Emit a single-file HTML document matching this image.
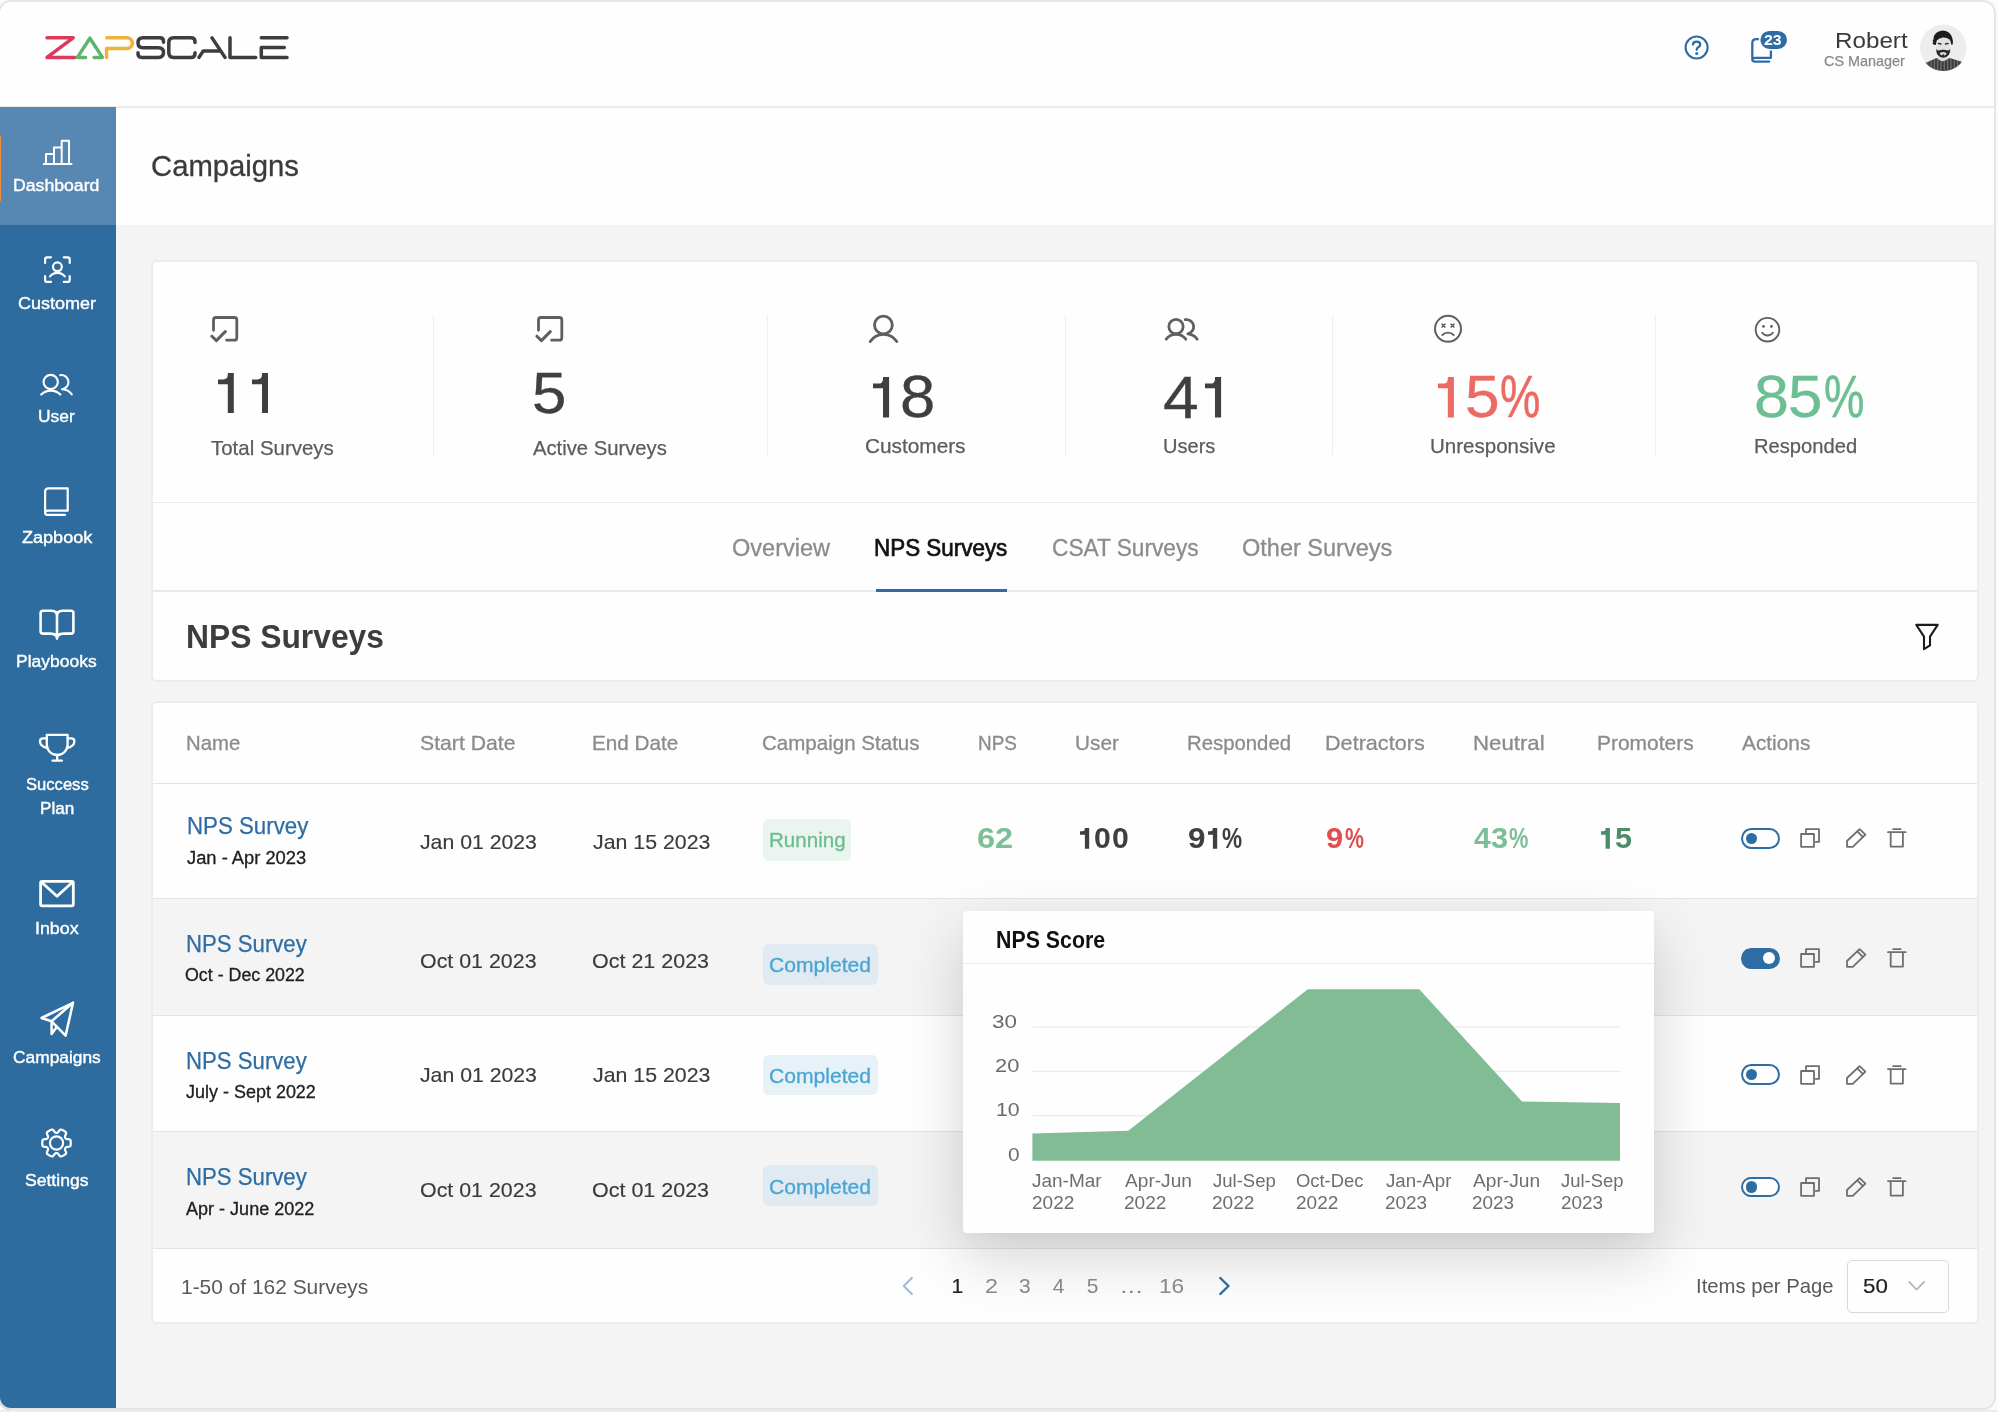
<!DOCTYPE html>
<html><head><meta charset="utf-8"><title>Campaigns</title>
<style>
html,body{margin:0;padding:0;}
body{width:1998px;height:1412px;overflow:hidden;background:#f6f6f6;font-family:"Liberation Sans",sans-serif;position:relative;}
.t{position:absolute;white-space:nowrap;line-height:1;margin:0;padding:0;transform-origin:0 0;}
.b{position:absolute;box-sizing:border-box;display:block;}
</style></head><body><div id="wrap" style="position:absolute;left:0;top:0;width:1998px;height:1412px;will-change:transform">
<div class="b" style="left:0px;top:0px;width:1996px;height:1410px;background:#f4f4f5;"></div>
<div class="b" style="left:0px;top:0px;width:1996px;height:108px;background:#fefefe;border-bottom:2px solid #ebebeb;"></div>
<div class="b" style="left:116px;top:108px;width:1880px;height:117px;background:#fefefe;"></div>
<div class="b" style="left:0px;top:107px;width:116px;height:1303px;background:#2e6c9f;"></div>
<div class="b" style="left:0px;top:107px;width:116px;height:118px;background:#5788b3;"></div>
<div class="b" style="left:0px;top:136px;width:1.2px;height:65px;background:#ee8f3c;"></div>
<svg class="b" style="left:40px;top:28px;" width="260" height="40" viewBox="40 28 260 40" fill="none">
<g stroke-width="3.5" stroke-linecap="round" stroke-linejoin="round" fill="none">
<path d="M47 37.8H73.2L47 57.4H75" stroke="#dc3a5d"/>
<path d="M89.9 38.2L77.4 57.4H85.6M89.9 38.2L102.4 57.4H94.1" stroke="#5fb56b"/>
<path d="M106.8 37.8H127A5.35 5.35 0 0 1 127 48.5H106.6V57.4" stroke="#efb23b"/>
<path d="M163.5 42.3V41.5Q163.5 37.8 159.8 37.8H143Q138 37.8 138 42.7Q138 47.7 143 47.7H158.5Q163.5 47.7 163.5 52.5Q163.5 57.4 158.5 57.4H141.7Q138 57.4 138 53.7V52.8" stroke="#3d3d41"/>
<path d="M195 42.5V41.8Q195 37.8 191 37.8H173.8Q168.8 37.8 168.8 42.8V52.4Q168.8 57.4 173.8 57.4H191Q195 57.4 195 53.4V52.8" stroke="#3d3d41"/>
<path d="M212 37.9L225 57.4M220.5 51H203.2L199 57.4" stroke="#3d3d41"/>
<path d="M230 37.8V57.4H255.7" stroke="#3d3d41"/>
<path d="M261.3 37.8H287M284.3 47.4H261.3V57.4H287" stroke="#3d3d41"/>
</g></svg>
<svg class="b" style="left:1682px;top:33px;" width="30" height="30" viewBox="1682 33 30 30" fill="none"><circle cx="1696.6" cy="47.5" r="11" stroke="#2e6da4" stroke-width="2.1"/><path d="M1693 44.6Q1693 41.6 1696.6 41.6Q1700.2 41.6 1700.2 44.4Q1700.2 46.2 1698.2 47.2Q1696.7 48 1696.7 49.8" stroke="#2e6da4" stroke-width="2.3" stroke-linecap="round" fill="none"/><circle cx="1696.7" cy="53.6" r="1.5" fill="#2e6da4"/></svg>
<svg class="b" style="left:1745px;top:25px;" width="50" height="45" viewBox="1745 25 50 45" fill="none"><path d="M1752.3 57.8V43.2Q1752.3 39.2 1756.3 39.2H1767Q1770.9 39.2 1770.9 43.2V57.8H1755.2Q1752.3 57.8 1752.3 59.7Q1752.3 61.6 1755.2 61.6H1769.2" stroke="#2e6da4" stroke-width="2.3" stroke-linecap="round" stroke-linejoin="round" fill="none"/><rect x="1759.6" y="30.1" width="28.2" height="19.6" rx="9.8" fill="#2e6da4" stroke="#fdfdfd" stroke-width="1.6"/></svg>
<div class="t" style="left:1764.44px;top:33.00px;font-size:14.2px;color:#ffffff;transform:scaleX(1.1216);font-weight:700;">23</div>
<div class="t" style="left:1834.79px;top:29.00px;font-size:22.9px;color:#3a3a3a;transform:scaleX(1.0570);">Robert</div>
<div class="t" style="left:1824.09px;top:54.00px;font-size:14.2px;color:#8a8a8a;transform:scaleX(1.0140);-webkit-text-stroke:0.25px #8a8a8a;">CS Manager</div>
<svg class="b" style="left:1915px;top:20px;" width="58" height="56" viewBox="1915 20 58 56" fill="none">
<defs><clipPath id="avc"><circle cx="1943.3" cy="47.7" r="23.3"/></clipPath>
<clipPath id="shirt"><path d="M1918 70L1925.5 63L1936 58.3Q1937.5 58 1938.2 59.2Q1943 63.2 1948 59Q1948.8 58 1950.2 58.2L1961.5 61.8L1969 68V76H1918Z"/></clipPath></defs>
<g clip-path="url(#avc)">
<rect x="1915" y="20" width="58" height="56" fill="#ededee"/>
<path d="M1938.3 55H1948V60Q1943 63.4 1938.3 60Z" fill="#dcdcdc"/>
<g clip-path="url(#shirt)"><rect x="1915" y="55" width="58" height="22" fill="#3b3b3b"/><path d="M1924.5 56V74M1927.8 56V74M1931.1 56V74M1934.4 56V74M1937.7 56V74M1941.0 56V74M1944.3 56V74M1947.6 56V74M1950.9 56V74M1954.2 56V74M1957.5 56V74M1960.8 56V74M1964.1 56V74" stroke="#707070" stroke-width="1.3"/></g>
<path d="M1936 42Q1936 36.5 1943.2 36.5Q1950.4 36.5 1950.4 42V50Q1950.4 57.6 1943.2 57.6Q1936 57.6 1936 50Z" fill="#e2e2e2"/>
<path d="M1936.1 49Q1936.4 57.6 1943.2 57.7Q1950 57.6 1950.3 49Q1949 50.5 1947.6 50.6Q1945.5 49.6 1943.2 49.7Q1940.9 49.6 1938.8 50.6Q1937.4 50.5 1936.1 49Z" fill="#262626"/>
<path d="M1939.6 53.2Q1943.2 50.8 1946.8 53.2Q1946 55.4 1944.2 55.6L1943.2 53.8L1942.2 55.6Q1940.4 55.4 1939.6 53.2Z" fill="#d6d6d6"/>
<path d="M1932.4 43.5L1933.3 41.8L1932.6 40.4L1933.8 38.8L1933.5 37.2Q1935.5 31.4 1942.6 30.6Q1949.5 31 1952 37Q1953.3 40.5 1952.8 44.4L1951 44.6Q1951 41.5 1949.6 39.6Q1946.5 37.4 1943 37.6Q1938.8 38 1936.8 40.6Q1936.2 42.5 1936 44.8L1934.4 45Z" fill="#1e1e1e"/>
<path d="M1937.8 43.6Q1939.6 43 1941.4 44.3M1945 44.3Q1946.8 43 1948.6 43.6" stroke="#2c2c2c" stroke-width="1.5" fill="none"/>
</g></svg>
<div class="t" style="left:151.01px;top:151.00px;font-size:29.5px;color:#3b3b3b;transform:scaleX(0.9918);-webkit-text-stroke:0.3px #3b3b3b;">Campaigns</div>
<svg class="b" style="left:30px;top:132px;" width="56" height="40" viewBox="30 132 56 40" fill="none"><g stroke="#ffffff" stroke-width="2" stroke-linecap="round" stroke-linejoin="round" fill="none"><path d="M44 164H71.3M46 164V154H54M54 164V147.4H61.7M61.7 164V140.7H69V164" stroke-linecap="square"/></g></svg>
<div class="t" style="left:12.74px;top:178.00px;font-size:16.9px;color:#ffffff;transform:scaleX(1.0449);-webkit-text-stroke:0.4px #ffffff;">Dashboard</div>
<svg class="b" style="left:30px;top:250px;" width="56" height="40" viewBox="30 250 56 40" fill="none"><g stroke="#ffffff" stroke-width="2.2" stroke-linecap="round" stroke-linejoin="round" fill="none"><path d="M45.1 263V259.3Q45.1 257.3 47.1 257.3H51M63.8 257.3H67.7Q69.7 257.3 69.7 259.3V263M45.1 276.2V279.9Q45.1 281.9 47.1 281.9H51M63.8 281.9H67.7Q69.7 281.9 69.7 279.9V276.2"/><circle cx="57.4" cy="266.8" r="4.4"/><path d="M50 276.4A9.6 9.6 0 0 1 64.8 276.4"/></g></svg>
<div class="t" style="left:17.75px;top:296.00px;font-size:16.9px;color:#ffffff;transform:scaleX(1.0665);-webkit-text-stroke:0.4px #ffffff;">Customer</div>
<svg class="b" style="left:30px;top:368px;" width="56" height="34" viewBox="30 368 56 34" fill="none"><g stroke="#ffffff" stroke-width="2.1" stroke-linecap="round" stroke-linejoin="round" fill="none"><circle cx="50.7" cy="382" r="7.15"/><path d="M41.2 394.6A13.5 13.5 0 0 1 60.4 394.6"/><path d="M60.2 375.1A7.15 7.15 0 1 1 62.3 389.3"/><path d="M62.3 389.3Q68.4 389.6 71.8 394.3"/></g></svg>
<div class="t" style="left:38.46px;top:409.00px;font-size:16.9px;color:#ffffff;transform:scaleX(1.0292);-webkit-text-stroke:0.4px #ffffff;">User</div>
<svg class="b" style="left:30px;top:482px;" width="56" height="40" viewBox="30 482 56 40" fill="none"><g stroke="#ffffff" stroke-width="2.2" stroke-linecap="round" stroke-linejoin="round" fill="none"><path d="M67.7 510.7V488.3H48.6Q45.1 488.3 45.1 491.8V512.5Q45.1 514.9 47.5 514.9H65M67.7 510.7H48Q45.1 510.7 45.1 513"/></g></svg>
<div class="t" style="left:21.67px;top:530.00px;font-size:16.9px;color:#ffffff;transform:scaleX(1.0689);-webkit-text-stroke:0.4px #ffffff;">Zapbook</div>
<svg class="b" style="left:30px;top:604px;" width="56" height="42" viewBox="30 604 56 42" fill="none"><g stroke="#ffffff" stroke-width="2.6" stroke-linecap="round" stroke-linejoin="round" fill="none"><path d="M57 615.8V638.6M57 615.8Q57 610.7 51.5 610.7H43Q40.6 610.7 40.6 613.1V631.2Q40.6 633.6 43 633.6H50.5Q57 633.6 57 638.6M57 615.8Q57 610.7 62.5 610.7H71Q73.4 610.7 73.4 613.1V631.2Q73.4 633.6 71 633.6H63.5Q57 633.6 57 638.6"/></g></svg>
<div class="t" style="left:16.45px;top:654.00px;font-size:16.9px;color:#ffffff;transform:scaleX(1.0355);-webkit-text-stroke:0.4px #ffffff;">Playbooks</div>
<svg class="b" style="left:30px;top:728px;" width="56" height="40" viewBox="30 728 56 40" fill="none"><g stroke="#ffffff" stroke-width="2.3" stroke-linecap="round" stroke-linejoin="round" fill="none"><path d="M46.8 734.8H67.6V744.6A10.4 10.4 0 0 1 46.8 744.6Z"/><path d="M46.8 738.3H43Q40 738.3 40 741.3Q40 746.5 47.4 748.2M67.6 738.3H71.4Q74.4 738.3 74.4 741.3Q74.4 746.5 67 748.2"/><path d="M57.2 755V760.7M52.5 760.7H61.9"/></g></svg>
<div class="t" style="left:25.51px;top:777.00px;font-size:16.9px;color:#ffffff;transform:scaleX(0.9824);-webkit-text-stroke:0.4px #ffffff;">Success</div>
<div class="t" style="left:39.98px;top:801.00px;font-size:16.9px;color:#ffffff;transform:scaleX(1.0160);-webkit-text-stroke:0.4px #ffffff;">Plan</div>
<svg class="b" style="left:30px;top:874px;" width="56" height="40" viewBox="30 874 56 40" fill="none"><g stroke="#ffffff" stroke-width="2.8" stroke-linecap="round" stroke-linejoin="round" fill="none"><rect x="40.6" y="881.3" width="32.7" height="24.5" rx="1.5"/><path d="M41.6 882.3L57 896.3L72.4 882.3"/></g></svg>
<div class="t" style="left:35.22px;top:921.00px;font-size:16.9px;color:#ffffff;transform:scaleX(1.0554);-webkit-text-stroke:0.4px #ffffff;">Inbox</div>
<svg class="b" style="left:30px;top:996px;" width="56" height="46" viewBox="30 996 56 46" fill="none"><g stroke="#ffffff" stroke-width="2.5" stroke-linecap="round" stroke-linejoin="round" fill="none"><path d="M73 1002.8L41.5 1018L51.6 1021.3Z"/><path d="M51.6 1021.3L65.6 1035.6L73 1002.8"/><path d="M51.6 1021.3V1034L56 1028"/></g></svg>
<div class="t" style="left:13.28px;top:1050.00px;font-size:16.9px;color:#ffffff;transform:scaleX(1.0273);-webkit-text-stroke:0.4px #ffffff;">Campaigns</div>
<svg class="b" style="left:30px;top:1122px;" width="56" height="42" viewBox="30 1122 56 42" fill="none"><g stroke="#ffffff" stroke-width="2.2" stroke-linecap="round" stroke-linejoin="round" fill="none"><path d="M70.75 1143.00L70.73 1143.75L70.67 1144.49L70.57 1145.23L70.44 1145.96L69.70 1146.54L68.20 1146.80L66.79 1146.95L65.95 1147.21L65.59 1147.63L65.33 1148.10L65.05 1148.56L64.87 1149.08L65.07 1149.94L65.64 1151.23L66.16 1152.66L66.04 1153.59L65.47 1154.07L64.88 1154.53L64.26 1154.95L63.62 1155.34L62.97 1155.70L62.30 1156.02L61.61 1156.30L60.90 1156.55L60.04 1156.20L59.06 1155.03L58.22 1153.89L57.58 1153.29L57.03 1153.19L56.50 1153.20L55.97 1153.19L55.42 1153.29L54.78 1153.89L53.94 1155.03L52.96 1156.20L52.10 1156.55L51.39 1156.30L50.70 1156.02L50.03 1155.70L49.38 1155.34L48.74 1154.95L48.12 1154.53L47.53 1154.07L46.96 1153.59L46.84 1152.66L47.36 1151.23L47.93 1149.94L48.13 1149.08L47.95 1148.56L47.67 1148.10L47.41 1147.63L47.05 1147.21L46.21 1146.95L44.80 1146.80L43.30 1146.54L42.56 1145.96L42.43 1145.23L42.33 1144.49L42.27 1143.75L42.25 1143.00L42.27 1142.25L42.33 1141.51L42.43 1140.77L42.56 1140.04L43.30 1139.46L44.80 1139.20L46.21 1139.05L47.05 1138.79L47.41 1138.37L47.67 1137.90L47.95 1137.44L48.13 1136.92L47.93 1136.06L47.36 1134.77L46.84 1133.34L46.96 1132.41L47.53 1131.93L48.12 1131.47L48.74 1131.05L49.37 1130.66L50.03 1130.30L50.70 1129.98L51.39 1129.70L52.10 1129.45L52.96 1129.80L53.94 1130.97L54.78 1132.11L55.42 1132.71L55.97 1132.81L56.50 1132.80L57.03 1132.81L57.58 1132.71L58.22 1132.11L59.06 1130.97L60.04 1129.80L60.90 1129.45L61.61 1129.70L62.30 1129.98L62.97 1130.30L63.62 1130.66L64.26 1131.05L64.88 1131.47L65.47 1131.93L66.04 1132.41L66.16 1133.34L65.64 1134.77L65.07 1136.06L64.87 1136.92L65.05 1137.44L65.33 1137.90L65.59 1138.37L65.95 1138.79L66.79 1139.05L68.20 1139.20L69.70 1139.46L70.44 1140.04L70.57 1140.77L70.67 1141.51L70.73 1142.25Z"/><circle cx="56.5" cy="1143" r="6.6"/></g></svg>
<div class="t" style="left:25.17px;top:1173.00px;font-size:16.9px;color:#ffffff;transform:scaleX(1.0402);-webkit-text-stroke:0.4px #ffffff;">Settings</div>
<div class="b" style="left:151px;top:260px;width:1828px;height:422px;background:#fefefe;border:2px solid #ececec;border-radius:6px;"></div>
<div class="b" style="left:153px;top:501.8px;width:1824px;height:1.2px;background:#e9e9e9;"></div>
<div class="b" style="left:153px;top:590.4px;width:1824px;height:1.2px;background:#e9e9e9;"></div>
<div class="b" style="left:433.0px;top:315px;width:1px;height:140px;background:#eeeeee;"></div>
<div class="b" style="left:767.0px;top:315px;width:1px;height:140px;background:#eeeeee;"></div>
<div class="b" style="left:1065.1px;top:315px;width:1px;height:140px;background:#eeeeee;"></div>
<div class="b" style="left:1331.9px;top:315px;width:1px;height:140px;background:#eeeeee;"></div>
<div class="b" style="left:1654.7px;top:315px;width:1px;height:140px;background:#eeeeee;"></div>
<svg class="b" style="left:205px;top:310px;" width="40" height="38" viewBox="205 310 40 38" fill="none"><g stroke="#5f5f5f" stroke-width="2.8" stroke-linecap="round" stroke-linejoin="round" fill="none"><path d="M213.5 330.3V320Q213.5 317.5 216 317.5H234.3Q236.8 317.5 236.8 320V337.7Q236.8 340.2 234.3 340.2H226.6"/><path d="M211.9 336.2L216.4 340.6L225.3 331.6" stroke-width="3"/></g></svg>
<svg class="b" style="left:529.8px;top:310px;" width="40" height="38" viewBox="529.8 310 40 38" fill="none"><g stroke="#5f5f5f" stroke-width="2.8" stroke-linecap="round" stroke-linejoin="round" fill="none"><path d="M538.3 330.3V320Q538.3 317.5 540.8 317.5H559.1Q561.6 317.5 561.6 320V337.7Q561.6 340.2 559.1 340.2H551.4"/><path d="M536.7 336.2L541.2 340.6L550.1 331.6" stroke-width="3"/></g></svg>
<svg class="b" style="left:862px;top:310px;" width="44" height="38" viewBox="862 310 44 38" fill="none"><g stroke="#5f5f5f" stroke-width="2.8" stroke-linecap="round" stroke-linejoin="round" fill="none"><circle cx="883.4" cy="325" r="8.9"/><path d="M870.2 341.6A15.8 15.8 0 0 1 896.8 341.6"/></g></svg>
<svg class="b" style="left:1158px;top:312px;" width="46" height="34" viewBox="1158 312 46 34" fill="none"><g stroke="#5f5f5f" stroke-width="2.8" stroke-linecap="round" stroke-linejoin="round" fill="none"><circle cx="1176" cy="326.6" r="7.15"/><path d="M1166.2 339.2A12.5 12.5 0 0 1 1185.8 339.2"/><path d="M1185.2 319.7A7.15 7.15 0 1 1 1187.8 333.8Q1193.8 334.2 1197.2 339.2"/></g></svg>
<svg class="b" style="left:1430px;top:310px;" width="38" height="38" viewBox="1430 310 38 38" fill="none"><g stroke="#5f5f5f" stroke-width="2" stroke-linecap="round" stroke-linejoin="round" fill="none"><circle cx="1448" cy="328.8" r="13"/><path d="M1441.6 323.7L1445.4 327.5M1445.4 323.7L1441.6 327.5M1450.6 323.7L1454.4 327.5M1454.4 323.7L1450.6 327.5" stroke-width="1.6" stroke-linecap="butt"/><path d="M1442.4 335A7.8 7.8 0 0 1 1453.6 335" stroke-width="1.8"/></g></svg>
<svg class="b" style="left:1750px;top:312px;" width="36" height="36" viewBox="1750 312 36 36" fill="none"><g stroke="#5f5f5f" stroke-width="1.9" stroke-linecap="round" stroke-linejoin="round" fill="none"><circle cx="1767.5" cy="329.7" r="11.8"/><circle cx="1763.5" cy="326.4" r="1.4" fill="#5f5f5f" stroke="none"/><circle cx="1771.4" cy="326.4" r="1.4" fill="#5f5f5f" stroke="none"/><path d="M1762.2 332.8A6.5 6.5 0 0 0 1772.8 332.8" stroke-width="1.9"/></g></svg>
<svg class="b" style="left:217.50px;top:372.80px;overflow:visible" width="15.80" height="40.00" viewBox="0 -40.00 15.80 40.00"><path d="M9.80 -40.00H15.80V0H9.80V-28.84H0V-33.52H5.10Q9.80 -33.52 9.80 -38.38Z" fill="#3f3f3f"/></svg>
<svg class="b" style="left:251.70px;top:372.80px;overflow:visible" width="16.00" height="40.00" viewBox="0 -40.00 16.00 40.00"><path d="M10.00 -40.00H16.00V0H10.00V-28.84H0V-33.52H5.20Q10.00 -33.52 10.00 -38.38Z" fill="#3f3f3f"/></svg>
<div class="t" style="left:210.91px;top:437.00px;font-size:21px;color:#5c5c5c;transform:scaleX(0.9744);-webkit-text-stroke:0.25px #5c5c5c;">Total Surveys</div>
<div class="t" style="left:532.16px;top:364.00px;font-size:58.2px;color:#3f3f3f;transform:scaleX(1.0616);-webkit-text-stroke:0.3px #3f3f3f;">5</div>
<div class="t" style="left:532.80px;top:437.00px;font-size:21px;color:#5c5c5c;transform:scaleX(0.9638);-webkit-text-stroke:0.25px #5c5c5c;">Active Surveys</div>
<svg class="b" style="left:872.80px;top:377.10px;overflow:visible" width="16.10" height="40.60" viewBox="0 -40.60 16.10 40.60"><path d="M10.01 -40.60H16.10V0H10.01V-29.27H0V-34.02H5.21Q10.01 -34.02 10.01 -38.96Z" fill="#3f3f3f"/></svg>
<div class="t" style="left:899.61px;top:368.00px;font-size:59px;color:#3f3f3f;transform:scaleX(1.0755);-webkit-text-stroke:0.3px #3f3f3f;">8</div>
<div class="t" style="left:865.31px;top:435.00px;font-size:21px;color:#5c5c5c;transform:scaleX(0.9900);-webkit-text-stroke:0.25px #5c5c5c;">Customers</div>
<div class="t" style="left:1163.29px;top:369.00px;font-size:59px;color:#3f3f3f;transform:scaleX(1.0872);-webkit-text-stroke:0.3px #3f3f3f;">4</div>
<svg class="b" style="left:1205.00px;top:377.10px;overflow:visible" width="16.10" height="40.60" viewBox="0 -40.60 16.10 40.60"><path d="M10.01 -40.60H16.10V0H10.01V-29.27H0V-34.02H5.21Q10.01 -34.02 10.01 -38.96Z" fill="#3f3f3f"/></svg>
<div class="t" style="left:1163.27px;top:435.00px;font-size:21px;color:#5c5c5c;transform:scaleX(0.9543);-webkit-text-stroke:0.25px #5c5c5c;">Users</div>
<svg class="b" style="left:1438.00px;top:377.10px;overflow:visible" width="15.90" height="40.60" viewBox="0 -40.60 15.90 40.60"><path d="M9.81 -40.60H15.90V0H9.81V-29.27H0V-34.02H5.10Q9.81 -34.02 9.81 -38.96Z" fill="#ec6a63"/></svg>
<div class="t" style="left:1465.06px;top:368.00px;font-size:59px;color:#ec6a63;transform:scaleX(1.0571);-webkit-text-stroke:0.3px #ec6a63;">5</div>
<div class="t" style="left:1500.49px;top:368.00px;font-size:59px;color:#ec6a63;transform:scaleX(0.7681);-webkit-text-stroke:0.5px #ec6a63;">%</div>
<div class="t" style="left:1430.44px;top:435.00px;font-size:21px;color:#5c5c5c;transform:scaleX(0.9778);-webkit-text-stroke:0.25px #5c5c5c;">Unresponsive</div>
<div class="t" style="left:1753.94px;top:368.00px;font-size:59px;color:#6cbf92;transform:scaleX(1.0647);-webkit-text-stroke:0.3px #6cbf92;">8</div>
<div class="t" style="left:1788.38px;top:368.00px;font-size:59px;color:#6cbf92;transform:scaleX(1.0500);-webkit-text-stroke:0.3px #6cbf92;">5</div>
<div class="t" style="left:1823.78px;top:368.00px;font-size:59px;color:#6cbf92;transform:scaleX(0.7702);-webkit-text-stroke:0.5px #6cbf92;">%</div>
<div class="t" style="left:1754.17px;top:435.00px;font-size:21px;color:#5c5c5c;transform:scaleX(0.9597);-webkit-text-stroke:0.25px #5c5c5c;">Responded</div>
<div class="t" style="left:731.87px;top:537.00px;font-size:23px;color:#8c8c8c;transform:scaleX(1.0232);-webkit-text-stroke:0.3px #8c8c8c;">Overview</div>
<div class="t" style="left:874.15px;top:537.00px;font-size:23px;color:#111111;transform:scaleX(0.9746);-webkit-text-stroke:0.7px #111111;">NPS Surveys</div>
<div class="t" style="left:1051.51px;top:537.00px;font-size:23px;color:#8c8c8c;transform:scaleX(0.9864);-webkit-text-stroke:0.3px #8c8c8c;">CSAT Surveys</div>
<div class="t" style="left:1242.28px;top:537.00px;font-size:23px;color:#8c8c8c;transform:scaleX(1.0221);-webkit-text-stroke:0.3px #8c8c8c;">Other Surveys</div>
<div class="b" style="left:875.8px;top:589px;width:131.2px;height:2.8px;background:#2e6da4;"></div>
<div class="t" style="left:185.71px;top:620.00px;font-size:33.5px;color:#3d3d3d;transform:scaleX(0.9493);font-weight:700;">NPS Surveys</div>
<svg class="b" style="left:1910px;top:620px;" width="36" height="36" viewBox="1910 620 36 36" fill="none"><path d="M1916.3 624.9H1937.7L1930 636.6V645.4L1924 649.2V636.6Z" stroke="#1c1c1c" stroke-width="2.1" stroke-linejoin="round" fill="none"/></svg>
<div class="b" style="left:151px;top:701px;width:1828px;height:623px;background:#fefefe;border:2px solid #ececec;border-radius:6px;overflow:hidden;"></div>
<div class="b" style="left:153px;top:898.5px;width:1824px;height:117px;background:#f4f4f5;"></div>
<div class="b" style="left:153px;top:1131.5px;width:1824px;height:117px;background:#f4f4f5;"></div>
<div class="b" style="left:153px;top:782.6px;width:1824px;height:1.2px;background:#e4e4e4;"></div>
<div class="b" style="left:153px;top:898.2px;width:1824px;height:1.2px;background:#e4e4e4;"></div>
<div class="b" style="left:153px;top:1015.2px;width:1824px;height:1.2px;background:#e4e4e4;"></div>
<div class="b" style="left:153px;top:1131.2px;width:1824px;height:1.2px;background:#e4e4e4;"></div>
<div class="b" style="left:153px;top:1248.2px;width:1824px;height:1.2px;background:#e4e4e4;"></div>
<div class="t" style="left:185.65px;top:732.00px;font-size:21px;color:#8b8b8b;transform:scaleX(0.9682);-webkit-text-stroke:0.3px #8b8b8b;">Name</div>
<div class="t" style="left:419.99px;top:732.00px;font-size:21px;color:#8b8b8b;transform:scaleX(1.0097);-webkit-text-stroke:0.3px #8b8b8b;">Start Date</div>
<div class="t" style="left:592.22px;top:732.00px;font-size:21px;color:#8b8b8b;transform:scaleX(0.9859);-webkit-text-stroke:0.3px #8b8b8b;">End Date</div>
<div class="t" style="left:762.22px;top:732.00px;font-size:21px;color:#8b8b8b;transform:scaleX(0.9780);-webkit-text-stroke:0.3px #8b8b8b;">Campaign Status</div>
<div class="t" style="left:977.97px;top:732.00px;font-size:21px;color:#8b8b8b;transform:scaleX(0.8990);-webkit-text-stroke:0.3px #8b8b8b;">NPS</div>
<div class="t" style="left:1075.42px;top:732.00px;font-size:21px;color:#8b8b8b;transform:scaleX(0.9906);-webkit-text-stroke:0.3px #8b8b8b;">User</div>
<div class="t" style="left:1186.85px;top:732.00px;font-size:21px;color:#8b8b8b;transform:scaleX(0.9684);-webkit-text-stroke:0.3px #8b8b8b;">Responded</div>
<div class="t" style="left:1325.25px;top:732.00px;font-size:21px;color:#8b8b8b;transform:scaleX(1.0296);-webkit-text-stroke:0.3px #8b8b8b;">Detractors</div>
<div class="t" style="left:1473.20px;top:732.00px;font-size:21px;color:#8b8b8b;transform:scaleX(1.0573);-webkit-text-stroke:0.3px #8b8b8b;">Neutral</div>
<div class="t" style="left:1596.90px;top:732.00px;font-size:21px;color:#8b8b8b;-webkit-text-stroke:0.3px #8b8b8b;">Promoters</div>
<div class="t" style="left:1741.60px;top:732.00px;font-size:21px;color:#8b8b8b;transform:scaleX(0.9927);-webkit-text-stroke:0.3px #8b8b8b;">Actions</div>
<div class="t" style="left:187.30px;top:815.00px;font-size:23.5px;color:#2e6da4;transform:scaleX(0.9476);-webkit-text-stroke:0.25px #2e6da4;">NPS Survey</div>
<div class="t" style="left:187.09px;top:850.00px;font-size:17.6px;color:#202020;transform:scaleX(1.0414);-webkit-text-stroke:0.3px #202020;">Jan - Apr 2023</div>
<div class="t" style="left:420.39px;top:832.00px;font-size:20.8px;color:#3a3a3a;transform:scaleX(1.0212);-webkit-text-stroke:0.15px #3a3a3a;">Jan 01 2023</div>
<div class="t" style="left:592.79px;top:832.00px;font-size:20.8px;color:#3a3a3a;transform:scaleX(1.0256);-webkit-text-stroke:0.15px #3a3a3a;">Jan 15 2023</div>
<div class="b" style="left:762.5px;top:819px;width:88.7px;height:42px;background:#e9f5ee;border-radius:6px;"></div>
<div class="t" style="left:768.52px;top:830.00px;font-size:20.8px;color:#6cbd90;transform:scaleX(0.9892);-webkit-text-stroke:0.3px #6cbd90;">Running</div>
<div class="b" style="left:1740.8px;top:828.0px;width:39.4px;height:20.8px;border:2px solid #2e6da4;border-radius:11px;background:#fefefe;"></div>
<div class="b" style="left:1745.7px;top:832.6999999999999px;width:11.4px;height:11.4px;background:#2e6da4;border-radius:50%;"></div>
<svg class="b" style="left:1795px;top:823.4px;" width="118" height="30" viewBox="1795 823.4 118 30" fill="none"><g transform="translate(0 0.00)" stroke="#6e6e6e" stroke-width="1.8" stroke-linejoin="round" stroke-linecap="round" fill="none"><path d="M1806 832.6V829.5H1819V842.3H1815.8"/><rect x="1801.1" y="834.4" width="12.9" height="12.8"/><path d="M1847 847.2V841.4L1859.6 829.5L1865.4 835L1852.8 847.2Z"/><path d="M1857.3 831.8L1862.8 837.2"/><path d="M1888 832.6H1905.6M1893.2 829.6H1900.6M1890.7 832.6V847H1902.9V832.6"/></g></svg>
<div class="t" style="left:186.41px;top:933.00px;font-size:23.5px;color:#2e6da4;transform:scaleX(0.9437);-webkit-text-stroke:0.25px #2e6da4;">NPS Survey</div>
<div class="t" style="left:185.19px;top:967.00px;font-size:17.6px;color:#202020;transform:scaleX(1.0120);-webkit-text-stroke:0.3px #202020;">Oct - Dec 2022</div>
<div class="t" style="left:419.67px;top:951.00px;font-size:20.8px;color:#3a3a3a;transform:scaleX(1.0287);-webkit-text-stroke:0.15px #3a3a3a;">Oct 01 2023</div>
<div class="t" style="left:592.07px;top:951.00px;font-size:20.8px;color:#3a3a3a;transform:scaleX(1.0332);-webkit-text-stroke:0.15px #3a3a3a;">Oct 21 2023</div>
<div class="b" style="left:762.5px;top:944px;width:115px;height:40.5px;background:#e0eaf2;border-radius:6px;"></div>
<div class="t" style="left:768.69px;top:955.00px;font-size:20.8px;color:#4aa5d2;transform:scaleX(1.0143);-webkit-text-stroke:0.3px #4aa5d2;">Completed</div>
<div class="b" style="left:1740.8px;top:947.8000000000001px;width:39.4px;height:20.8px;background:#2e6da4;border-radius:11px;"></div>
<div class="b" style="left:1763px;top:952.2px;width:12px;height:12px;background:#fefefe;border-radius:50%;"></div>
<svg class="b" style="left:1795px;top:943.2px;" width="118" height="30" viewBox="1795 943.2 118 30" fill="none"><g transform="translate(0 119.80)" stroke="#6e6e6e" stroke-width="1.8" stroke-linejoin="round" stroke-linecap="round" fill="none"><path d="M1806 832.6V829.5H1819V842.3H1815.8"/><rect x="1801.1" y="834.4" width="12.9" height="12.8"/><path d="M1847 847.2V841.4L1859.6 829.5L1865.4 835L1852.8 847.2Z"/><path d="M1857.3 831.8L1862.8 837.2"/><path d="M1888 832.6H1905.6M1893.2 829.6H1900.6M1890.7 832.6V847H1902.9V832.6"/></g></svg>
<div class="t" style="left:186.41px;top:1050.00px;font-size:23.5px;color:#2e6da4;transform:scaleX(0.9437);-webkit-text-stroke:0.25px #2e6da4;">NPS Survey</div>
<div class="t" style="left:185.69px;top:1084.00px;font-size:17.6px;color:#202020;transform:scaleX(1.0214);-webkit-text-stroke:0.3px #202020;">July - Sept 2022</div>
<div class="t" style="left:420.39px;top:1065.00px;font-size:20.8px;color:#3a3a3a;transform:scaleX(1.0212);-webkit-text-stroke:0.15px #3a3a3a;">Jan 01 2023</div>
<div class="t" style="left:592.79px;top:1065.00px;font-size:20.8px;color:#3a3a3a;transform:scaleX(1.0256);-webkit-text-stroke:0.15px #3a3a3a;">Jan 15 2023</div>
<div class="b" style="left:762.5px;top:1054.7px;width:115px;height:40.0px;background:#e6f1f8;border-radius:6px;"></div>
<div class="t" style="left:768.69px;top:1066.00px;font-size:20.8px;color:#4aa5d2;transform:scaleX(1.0143);-webkit-text-stroke:0.3px #4aa5d2;">Completed</div>
<div class="b" style="left:1740.8px;top:1064.1999999999998px;width:39.4px;height:20.8px;border:2px solid #2e6da4;border-radius:11px;background:#fefefe;"></div>
<div class="b" style="left:1745.7px;top:1068.8999999999999px;width:11.4px;height:11.4px;background:#2e6da4;border-radius:50%;"></div>
<svg class="b" style="left:1795px;top:1059.6px;" width="118" height="30" viewBox="1795 1059.6 118 30" fill="none"><g transform="translate(0 236.20)" stroke="#6e6e6e" stroke-width="1.8" stroke-linejoin="round" stroke-linecap="round" fill="none"><path d="M1806 832.6V829.5H1819V842.3H1815.8"/><rect x="1801.1" y="834.4" width="12.9" height="12.8"/><path d="M1847 847.2V841.4L1859.6 829.5L1865.4 835L1852.8 847.2Z"/><path d="M1857.3 831.8L1862.8 837.2"/><path d="M1888 832.6H1905.6M1893.2 829.6H1900.6M1890.7 832.6V847H1902.9V832.6"/></g></svg>
<div class="t" style="left:186.41px;top:1166.00px;font-size:23.5px;color:#2e6da4;transform:scaleX(0.9437);-webkit-text-stroke:0.25px #2e6da4;">NPS Survey</div>
<div class="t" style="left:186.00px;top:1201.00px;font-size:17.6px;color:#202020;transform:scaleX(1.0249);-webkit-text-stroke:0.3px #202020;">Apr - June 2022</div>
<div class="t" style="left:419.67px;top:1180.00px;font-size:20.8px;color:#3a3a3a;transform:scaleX(1.0287);-webkit-text-stroke:0.15px #3a3a3a;">Oct 01 2023</div>
<div class="t" style="left:592.07px;top:1180.00px;font-size:20.8px;color:#3a3a3a;transform:scaleX(1.0332);-webkit-text-stroke:0.15px #3a3a3a;">Oct 01 2023</div>
<div class="b" style="left:762.5px;top:1165.3px;width:115px;height:40.5px;background:#e0eaf2;border-radius:6px;"></div>
<div class="t" style="left:768.69px;top:1177.00px;font-size:20.8px;color:#4aa5d2;transform:scaleX(1.0143);-webkit-text-stroke:0.3px #4aa5d2;">Completed</div>
<div class="b" style="left:1740.8px;top:1176.6999999999998px;width:39.4px;height:20.8px;border:2px solid #2e6da4;border-radius:11px;background:#fefefe;"></div>
<div class="b" style="left:1745.7px;top:1181.3999999999999px;width:11.4px;height:11.4px;background:#2e6da4;border-radius:50%;"></div>
<svg class="b" style="left:1795px;top:1172.1px;" width="118" height="30" viewBox="1795 1172.1 118 30" fill="none"><g transform="translate(0 348.70)" stroke="#6e6e6e" stroke-width="1.8" stroke-linejoin="round" stroke-linecap="round" fill="none"><path d="M1806 832.6V829.5H1819V842.3H1815.8"/><rect x="1801.1" y="834.4" width="12.9" height="12.8"/><path d="M1847 847.2V841.4L1859.6 829.5L1865.4 835L1852.8 847.2Z"/><path d="M1857.3 831.8L1862.8 837.2"/><path d="M1888 832.6H1905.6M1893.2 829.6H1900.6M1890.7 832.6V847H1902.9V832.6"/></g></svg>
<div class="t" style="left:977.01px;top:823.00px;font-size:30px;color:#7cbf97;transform:scaleX(1.0836);font-weight:700;">62</div>
<svg class="b" style="left:1079.90px;top:827.60px;overflow:visible" width="9.20" height="20.70" viewBox="0 -20.70 9.20 20.70"><path d="M4.90 -20.70H9.20V0H4.90V-13.85H0V-17.35H2.55Q4.90 -17.35 4.90 -19.86Z" fill="#3f3f3f"/></svg>
<div class="t" style="left:1094.49px;top:823.00px;font-size:30px;color:#3f3f3f;transform:scaleX(1.0070);font-weight:700;">0</div>
<div class="t" style="left:1111.79px;top:823.00px;font-size:30px;color:#3f3f3f;transform:scaleX(1.0070);font-weight:700;">0</div>
<div class="t" style="left:1187.65px;top:823.00px;font-size:30px;color:#3f3f3f;transform:scaleX(1.0479);font-weight:700;">9</div>
<svg class="b" style="left:1207.80px;top:827.60px;overflow:visible" width="9.20" height="20.70" viewBox="0 -20.70 9.20 20.70"><path d="M4.90 -20.70H9.20V0H4.90V-13.85H0V-17.35H2.55Q4.90 -17.35 4.90 -19.86Z" fill="#3f3f3f"/></svg>
<div class="t" style="left:1222.37px;top:823.00px;font-size:30px;color:#3f3f3f;transform:scaleX(0.7540);font-weight:700;">%</div>
<div class="t" style="left:1325.97px;top:823.00px;font-size:30px;color:#e04e4e;transform:scaleX(1.0274);font-weight:700;">9</div>
<div class="t" style="left:1344.90px;top:823.00px;font-size:30px;color:#e04e4e;transform:scaleX(0.7103);font-weight:700;">%</div>
<div class="t" style="left:1473.80px;top:823.00px;font-size:30px;color:#7cbf97;transform:scaleX(1.0062);font-weight:700;">4</div>
<div class="t" style="left:1491.38px;top:823.00px;font-size:30px;color:#7cbf97;transform:scaleX(1.0268);font-weight:700;">3</div>
<div class="t" style="left:1509.49px;top:823.00px;font-size:30px;color:#7cbf97;transform:scaleX(0.7262);font-weight:700;">%</div>
<svg class="b" style="left:1601.00px;top:827.60px;overflow:visible" width="8.90" height="20.70" viewBox="0 -20.70 8.90 20.70"><path d="M4.60 -20.70H8.90V0H4.60V-13.85H0V-17.35H2.39Q4.60 -17.35 4.60 -19.86Z" fill="#4a8c65"/></svg>
<div class="t" style="left:1614.88px;top:823.00px;font-size:30px;color:#4a8c65;transform:scaleX(1.0200);font-weight:700;">5</div>
<div class="t" style="left:180.81px;top:1276.00px;font-size:21px;color:#595959;transform:scaleX(0.9962);">1-50 of 162 Surveys</div>
<div class="t" style="left:951.40px;top:1275.00px;font-size:21px;color:#222222;-webkit-text-stroke:0.2px #222222;">1</div>
<div class="t" style="left:984.89px;top:1275.00px;font-size:21px;color:#8b8b8b;transform:scaleX(1.1146);">2</div>
<div class="t" style="left:1018.90px;top:1275.00px;font-size:21px;color:#8b8b8b;">3</div>
<div class="t" style="left:1052.70px;top:1275.00px;font-size:21px;color:#8b8b8b;">4</div>
<div class="t" style="left:1086.70px;top:1275.00px;font-size:21px;color:#8b8b8b;">5</div>
<div class="t" style="left:1119.93px;top:1275.00px;font-size:21px;color:#8b8b8b;transform:scaleX(1.2993);">...</div>
<div class="t" style="left:1159.28px;top:1275.00px;font-size:21px;color:#8b8b8b;transform:scaleX(1.0766);">16</div>
<svg class="b" style="left:896px;top:1270px;" width="24" height="32" viewBox="896 1270 24 32" fill="none"><path d="M911.8 1278L903.8 1286L911.8 1294" stroke="#9dbdda" stroke-width="2.2" stroke-linecap="round" stroke-linejoin="round" fill="none"/></svg>
<svg class="b" style="left:1212px;top:1270px;" width="24" height="32" viewBox="1212 1270 24 32" fill="none"><path d="M1220.3 1278L1228.5 1286L1220.3 1294" stroke="#2e6da4" stroke-width="2.4" stroke-linecap="round" stroke-linejoin="round" fill="none"/></svg>
<div class="t" style="left:1695.67px;top:1275.00px;font-size:21px;color:#595959;transform:scaleX(0.9656);">Items per Page</div>
<div class="b" style="left:1846.5px;top:1259.8px;width:102px;height:53px;border:1.5px solid #d9d9d9;border-radius:5px;background:#fefefe;"></div>
<div class="t" style="left:1862.95px;top:1275.00px;font-size:21px;color:#222222;transform:scaleX(1.0642);-webkit-text-stroke:0.2px #222222;">50</div>
<svg class="b" style="left:1902px;top:1274px;" width="30" height="24" viewBox="1902 1274 30 24" fill="none"><path d="M1909.2 1282L1916.6 1289.6L1924 1282" stroke="#b9b9b9" stroke-width="1.8" stroke-linecap="round" stroke-linejoin="round" fill="none"/></svg>
<div class="b" style="left:963px;top:911px;width:691px;height:322px;background:#fefefe;border-radius:4px;box-shadow:0 24px 60px 2px rgba(0,0,0,0.16),0 3px 8px rgba(0,0,0,0.025);"></div>
<div class="b" style="left:963px;top:962.8px;width:691px;height:1.2px;background:#ebebeb;"></div>
<div class="t" style="left:995.76px;top:928.00px;font-size:23.8px;color:#111111;transform:scaleX(0.8969);font-weight:700;">NPS Score</div>
<svg class="b" style="left:1020px;top:980px;" width="610" height="190" viewBox="1020 980 610 190" fill="none"><path d="M1032.4 1026.9H1620.5" stroke="#ebebeb" stroke-width="1.2"/><path d="M1032.4 1071.3H1620.5" stroke="#ebebeb" stroke-width="1.2"/><path d="M1032.4 1115.6H1620.5" stroke="#ebebeb" stroke-width="1.2"/><path d="M1032.4 1133.4L1128.3 1130.8L1307.8 989.3L1419.3 989.3L1522 1101.5L1620 1103L1620 1160.8L1032.4 1160.8Z" fill="#82bc94"/></svg>
<div class="t" style="left:991.78px;top:1012.00px;font-size:19.2px;color:#6a6a6a;transform:scaleX(1.1700);">30</div>
<div class="t" style="left:994.97px;top:1056.00px;font-size:19.2px;color:#6a6a6a;transform:scaleX(1.1414);">20</div>
<div class="t" style="left:995.65px;top:1100.00px;font-size:19.2px;color:#6a6a6a;transform:scaleX(1.1088);">10</div>
<div class="t" style="left:1007.74px;top:1145.00px;font-size:19.2px;color:#6a6a6a;transform:scaleX(1.0860);">0</div>
<div class="t" style="left:1032.29px;top:1172.00px;font-size:18.6px;color:#6e6e6e;transform:scaleX(1.0207);">Jan-Mar</div>
<div class="t" style="left:1032.08px;top:1194.00px;font-size:18.6px;color:#6e6e6e;transform:scaleX(1.0228);">2022</div>
<div class="t" style="left:1124.60px;top:1172.00px;font-size:18.6px;color:#6e6e6e;transform:scaleX(1.0281);">Apr-Jun</div>
<div class="t" style="left:1124.08px;top:1194.00px;font-size:18.6px;color:#6e6e6e;transform:scaleX(1.0228);">2022</div>
<div class="t" style="left:1212.50px;top:1172.00px;font-size:18.6px;color:#6e6e6e;transform:scaleX(0.9968);">Jul-Sep</div>
<div class="t" style="left:1212.28px;top:1194.00px;font-size:18.6px;color:#6e6e6e;transform:scaleX(1.0228);">2022</div>
<div class="t" style="left:1296.11px;top:1172.00px;font-size:18.6px;color:#6e6e6e;transform:scaleX(0.9880);">Oct-Dec</div>
<div class="t" style="left:1296.48px;top:1194.00px;font-size:18.6px;color:#6e6e6e;transform:scaleX(1.0228);">2022</div>
<div class="t" style="left:1385.70px;top:1172.00px;font-size:18.6px;color:#6e6e6e;transform:scaleX(1.0047);">Jan-Apr</div>
<div class="t" style="left:1385.48px;top:1194.00px;font-size:18.6px;color:#6e6e6e;transform:scaleX(1.0176);">2023</div>
<div class="t" style="left:1472.60px;top:1172.00px;font-size:18.6px;color:#6e6e6e;transform:scaleX(1.0312);">Apr-Jun</div>
<div class="t" style="left:1472.08px;top:1194.00px;font-size:18.6px;color:#6e6e6e;transform:scaleX(1.0176);">2023</div>
<div class="t" style="left:1561.10px;top:1172.00px;font-size:18.6px;color:#6e6e6e;transform:scaleX(0.9903);">Jul-Sep</div>
<div class="t" style="left:1560.88px;top:1194.00px;font-size:18.6px;color:#6e6e6e;transform:scaleX(1.0176);">2023</div>
<div class="b" style="left:-2px;top:0px;width:1998px;height:1410px;border:2px solid #e5e5e5;border-radius:13px;box-shadow:0 0 0 30px #fbfbfb;pointer-events:none;"></div>
<div class="b" style="left:0px;top:1410.4px;width:1998px;height:2px;background:#f0ede9;"></div>
</div></body></html>
